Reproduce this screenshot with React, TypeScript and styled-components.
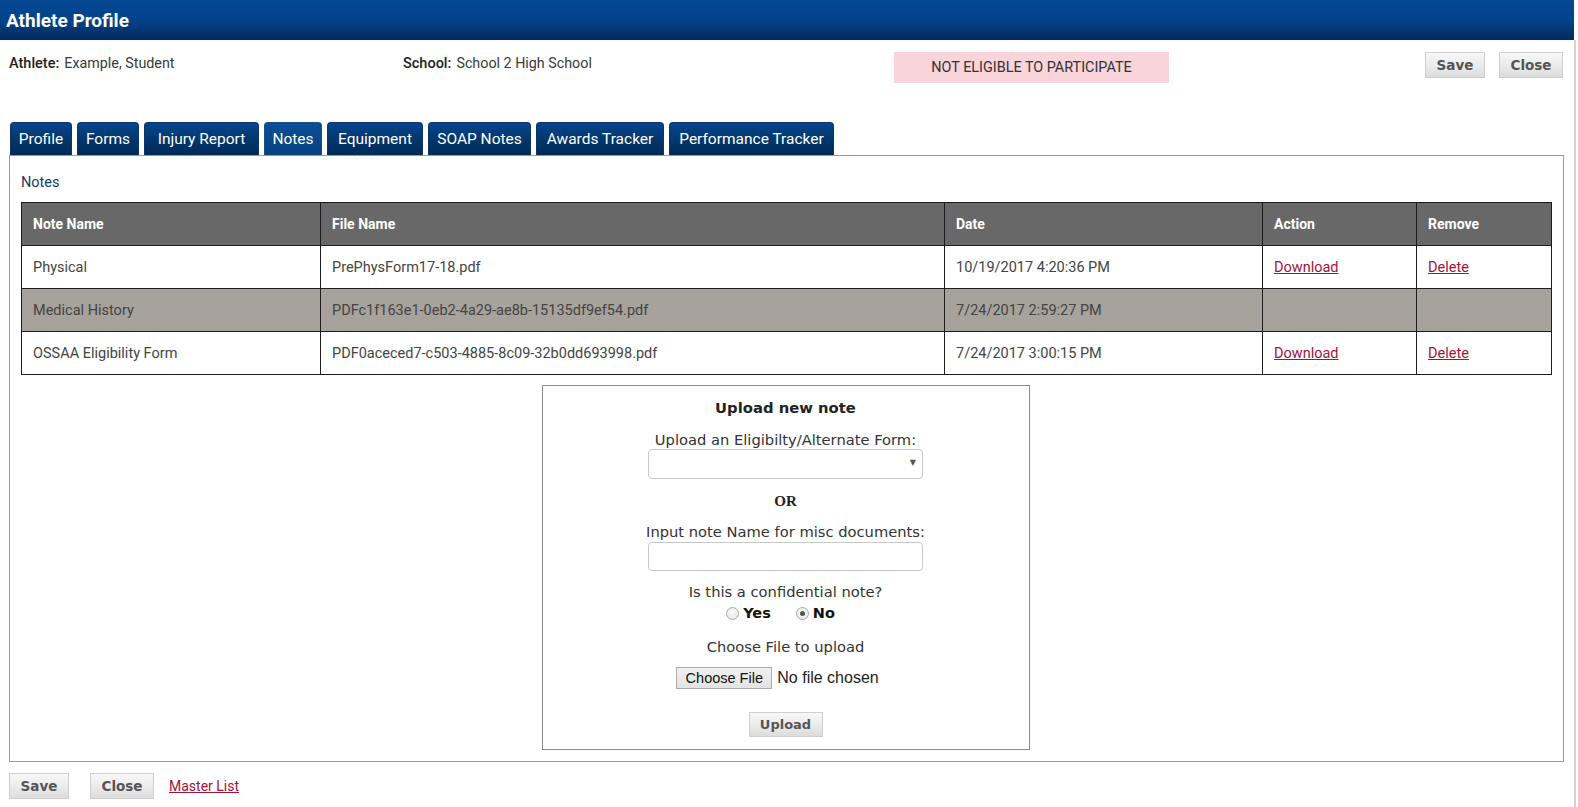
import React from "react";
import styled, { createGlobalStyle } from "styled-components";

const GlobalStyle = createGlobalStyle`
  html, body { margin: 0; padding: 0; background: #ffffff; }
  body { font-family: Roboto, "Liberation Sans", Arial, sans-serif; color: #333; }
  * { box-sizing: border-box; }
`;

const Page = styled.div`
  width: 1578px;
  min-height: 807px;
  background: #fff;
`;

const Header = styled.header`
  width: 1574px;
  height: 40px;
  display: flex;
  align-items: center;
  padding-left: 6px;
  background: linear-gradient(to bottom, #044893 0%, #03438a 50%, #012a5c 100%);
  color: #fff;
  font-size: 19px;
  font-weight: 700;
`;

const Content = styled.div`
  width: 1576px;
  border-right: 2px solid #d2d2d2;
  min-height: 767px;
`;

const InfoRow = styled.div`
  display: grid;
  grid-template-columns: 394px 491px 275px 1fr auto;
  align-items: start;
  padding: 12px 11px 0 9px;
  height: 43px;
`;

const Field = styled.div`
  display: flex;
  align-items: baseline;
  gap: 5px;
  padding-top: 3px;
  line-height: 16px;
`;

const FieldLabel = styled.span`
  font-size: 14.5px;
  font-weight: 500;
  color: #222;
`;

const FieldValue = styled.span`
  font-size: 14.3px;
  color: #3a3a3a;
`;

const StatusBox = styled.div`
  height: 31px;
  background: #f9d4da;
  display: flex;
  align-items: center;
  justify-content: center;
  font-size: 14.4px;
  color: #333;
`;

const ButtonGroup = styled.div<{ $gap: number }>`
  display: flex;
  align-items: center;
  gap: ${(p) => p.$gap}px;
`;

const GrayButton = styled.button<{ $w: number }>`
  width: ${(p) => p.$w}px;
  height: 26px;
  padding: 0;
  border: 1px solid #cfcfcf;
  background: linear-gradient(to bottom, #f7f7f7 0%, #ececec 50%, #dcdcdc 100%);
  font-family: "DejaVu Sans", Verdana, sans-serif;
  font-weight: 700;
  font-size: 13.5px;
  color: #555;
  cursor: pointer;
`;

const TabBar = styled.nav`
  display: flex;
  gap: 5px;
  padding-left: 10px;
  margin-top: 39px;
  height: 33px;
`;

const Tab = styled.div<{ $active?: boolean; $w: number }>`
  width: ${(p) => p.$w}px;
  height: 33px;
  display: flex;
  align-items: center;
  justify-content: center;
  border-radius: 4px 4px 0 0;
  color: #fff;
  font-size: 15.5px;
  white-space: nowrap;
  background: ${(p) =>
    p.$active
      ? "linear-gradient(to bottom, #0c4e97 0%, #07417f 100%)"
      : "linear-gradient(to bottom, #04468d 0%, #023467 60%, #012a58 100%)"};
  border: 1px solid ${(p) => (p.$active ? "#1a4f8a" : "#0f3566")};
  border-bottom: none;
  cursor: pointer;
`;

const Panel = styled.section`
  margin: 0 10px 0 9px;
  border: 1px solid #9a9a9a;
  padding: 19px 13px 11px 11px;
`;

const SectionTitle = styled.div`
  font-size: 14.5px;
  line-height: 16px;
  color: #173a6a;
  margin-bottom: 11px;
`;

const Table = styled.table`
  width: 1530px;
  border-collapse: collapse;
  table-layout: fixed;
`;

const Th = styled.th<{ $w: number }>`
  width: ${(p) => p.$w}px;
  height: 43px;
  background: #686868;
  color: #fff;
  font-size: 14px;
  font-weight: 700;
  text-align: left;
  padding: 0 11px;
  border: 1px solid #1c1c1c;
`;

const Tr = styled.tr<{ $shaded?: boolean }>`
  background: ${(p) => (p.$shaded ? "#a7a29c" : "#fff")};
`;

const Td = styled.td`
  height: 43px;
  padding: 0 11px;
  font-size: 14.5px;
  color: #444;
  border: 1px solid #1c1c1c;
  white-space: nowrap;
`;

const TableLink = styled.a`
  color: #a3123a;
  text-decoration: underline;
  font-size: 14.5px;
  cursor: pointer;
`;

const UploadBox = styled.div`
  width: 488px;
  margin: 10px auto 0;
  border: 1px solid #8c8c8c;
  padding: 14px 0 12px;
  display: flex;
  flex-direction: column;
  align-items: center;
  font-family: "DejaVu Sans", Verdana, sans-serif;
  font-size: 14.7px;
  color: #333;
  text-align: center;
`;

const UploadTitle = styled.div`
  font-weight: 700;
  font-size: 14.8px;
  line-height: 16px;
  color: #222;
`;

const UploadText = styled.div<{ $mt: number }>`
  margin-top: ${(p) => p.$mt}px;
  line-height: 16px;
`;

const SelectWrap = styled.div`
  position: relative;
  width: 275px;
  height: 30px;
  margin-top: 1px;
`;

const Select = styled.select`
  appearance: none;
  -webkit-appearance: none;
  width: 100%;
  height: 100%;
  border: 1px solid #c8c8c8;
  border-radius: 4px;
  background: #fff;
`;

const SelectArrow = styled.span`
  position: absolute;
  right: 7px;
  top: 9px;
  font-size: 8px;
  color: #555;
  pointer-events: none;
`;

const OrText = styled.div`
  margin-top: 14px;
  font-family: "Liberation Serif", "Times New Roman", serif;
  font-weight: 700;
  font-size: 15px;
  line-height: 16px;
  color: #222;
`;

const TextInput = styled.input`
  width: 275px;
  height: 29px;
  margin-top: 2px;
  border: 1px solid #c8c8c8;
  border-radius: 4px;
  background: #fff;
`;

const RadioRow = styled.div`
  margin-top: 5px;
  padding-right: 10px;
  display: flex;
  align-items: center;
  gap: 25px;
  height: 16px;
`;

const RadioLabel = styled.label`
  display: flex;
  align-items: center;
  gap: 4px;
  font-weight: 700;
  font-size: 14.5px;
  color: #111;
`;

const Radio = styled.input`
  appearance: none;
  -webkit-appearance: none;
  width: 13px;
  height: 13px;
  margin: 0;
  border-radius: 50%;
  border: 1px solid #a8a8a8;
  background: radial-gradient(circle at 50% 40%, #fbfbfb 0%, #e4e4e4 100%);
  position: relative;
  &:checked::after {
    content: "";
    position: absolute;
    left: 3px;
    top: 3px;
    width: 5px;
    height: 5px;
    border-radius: 50%;
    background: #555;
  }
`;

const FileRow = styled.div`
  margin-top: 12px;
  padding-right: 16px;
  display: flex;
  align-items: center;
  gap: 5px;
  font-family: "Liberation Sans", Arial, sans-serif;
  font-size: 16px;
  color: #222;
`;

const FileButton = styled.button`
  width: 96px;
  height: 22px;
  padding: 0;
  border: 1px solid #acacac;
  background: linear-gradient(to bottom, #f0f0f0 0%, #e3e3e3 100%);
  font-family: "Liberation Sans", Arial, sans-serif;
  font-size: 14.5px;
  color: #111;
`;

const UploadButton = styled(GrayButton)`
  height: 25px;
  margin-top: 23px;
  font-size: 13px;
`;

const Footer = styled.div`
  display: flex;
  align-items: center;
  padding: 11px 0 0 9px;
`;

const FooterLink = styled.a`
  margin-left: 15px;
  color: #a3123a;
  font-size: 14px;
  text-decoration: underline;
  cursor: pointer;
`;

const tabs = [
  { name: "Profile", w: 62 },
  { name: "Forms", w: 62 },
  { name: "Injury Report", w: 115 },
  { name: "Notes", w: 58 },
  { name: "Equipment", w: 96 },
  { name: "SOAP Notes", w: 103 },
  { name: "Awards Tracker", w: 128 },
  { name: "Performance Tracker", w: 165 },
];

const columns = [
  { name: "Note Name", w: 299 },
  { name: "File Name", w: 624 },
  { name: "Date", w: 318 },
  { name: "Action", w: 154 },
  { name: "Remove", w: 135 },
];

const rows = [
  {
    note: "Physical",
    file: "PrePhysForm17-18.pdf",
    date: "10/19/2017 4:20:36 PM",
    links: true,
  },
  {
    note: "Medical History",
    file: "PDFc1f163e1-0eb2-4a29-ae8b-15135df9ef54.pdf",
    date: "7/24/2017 2:59:27 PM",
    links: false,
  },
  {
    note: "OSSAA Eligibility Form",
    file: "PDF0aceced7-c503-4885-8c09-32b0dd693998.pdf",
    date: "7/24/2017 3:00:15 PM",
    links: true,
  },
];

export default function App() {
  return (
    <Page>
      <GlobalStyle />
      <Header>Athlete Profile</Header>
      <Content>
        <InfoRow>
          <Field>
            <FieldLabel>Athlete:</FieldLabel>
            <FieldValue>Example, Student</FieldValue>
          </Field>
          <Field>
            <FieldLabel>School:</FieldLabel>
            <FieldValue>School 2 High School</FieldValue>
          </Field>
          <StatusBox>NOT ELIGIBLE TO PARTICIPATE</StatusBox>
          <div />
          <ButtonGroup $gap={14}>
            <GrayButton $w={60}>Save</GrayButton>
            <GrayButton $w={64}>Close</GrayButton>
          </ButtonGroup>
        </InfoRow>

        <TabBar>
          {tabs.map((t) => (
            <Tab key={t.name} $w={t.w} $active={t.name === "Notes"}>
              {t.name}
            </Tab>
          ))}
        </TabBar>

        <Panel>
          <SectionTitle>Notes</SectionTitle>
          <Table>
            <thead>
              <tr>
                {columns.map((c) => (
                  <Th key={c.name} $w={c.w}>
                    {c.name}
                  </Th>
                ))}
              </tr>
            </thead>
            <tbody>
              {rows.map((r, i) => (
                <Tr key={r.file} $shaded={i === 1}>
                  <Td>{r.note}</Td>
                  <Td>{r.file}</Td>
                  <Td>{r.date}</Td>
                  <Td>{r.links && <TableLink>Download</TableLink>}</Td>
                  <Td>{r.links && <TableLink>Delete</TableLink>}</Td>
                </Tr>
              ))}
            </tbody>
          </Table>

          <UploadBox>
            <UploadTitle>Upload new note</UploadTitle>
            <UploadText $mt={16}>Upload an Eligibilty/Alternate Form:</UploadText>
            <SelectWrap>
              <Select defaultValue="">
                <option value=""></option>
              </Select>
              <SelectArrow>▼</SelectArrow>
            </SelectWrap>
            <OrText>OR</OrText>
            <UploadText $mt={15}>Input note Name for misc documents:</UploadText>
            <TextInput type="text" />
            <UploadText $mt={13}>Is this a confidential note?</UploadText>
            <RadioRow>
              <RadioLabel>
                <Radio type="radio" name="conf" />
                Yes
              </RadioLabel>
              <RadioLabel>
                <Radio type="radio" name="conf" defaultChecked />
                No
              </RadioLabel>
            </RadioRow>
            <UploadText $mt={18}>Choose File to upload</UploadText>
            <FileRow>
              <FileButton>Choose File</FileButton>
              <span>No file chosen</span>
            </FileRow>
            <UploadButton $w={74}>Upload</UploadButton>
          </UploadBox>
        </Panel>

        <Footer>
          <ButtonGroup $gap={21}>
            <GrayButton $w={60}>Save</GrayButton>
            <GrayButton $w={64}>Close</GrayButton>
          </ButtonGroup>
          <FooterLink>Master List</FooterLink>
        </Footer>
      </Content>
    </Page>
  );
}
